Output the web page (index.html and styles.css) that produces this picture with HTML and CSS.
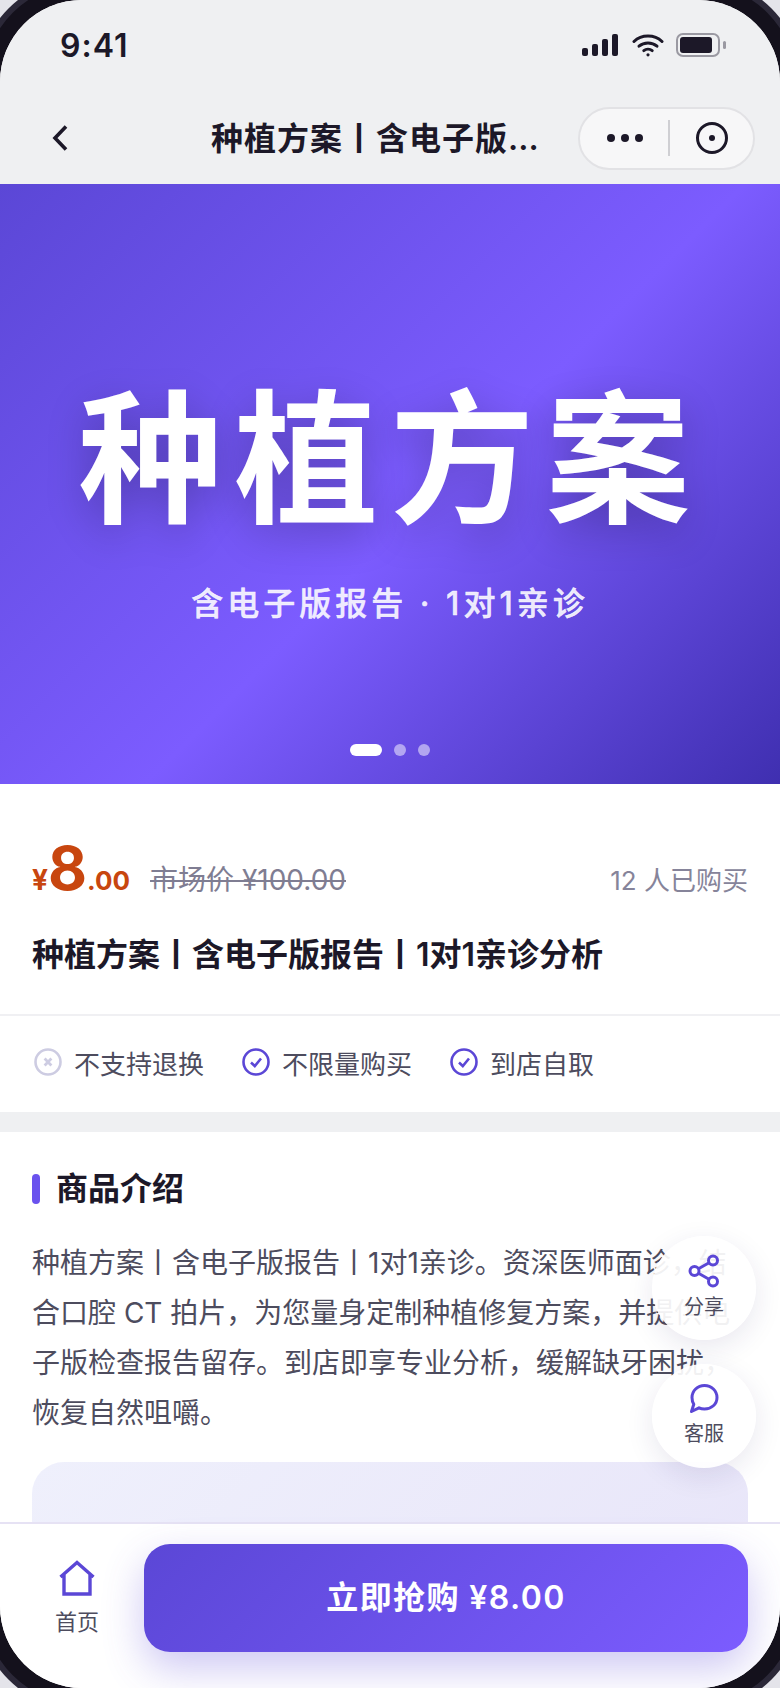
FILE: index.html
```html
<!DOCTYPE html>
<html lang="zh-CN">
<head>
    <meta charset="utf-8">
    <title>种植方案</title>
    <link rel="stylesheet" href="styles.css">
</head>
<body>
    <div class="device">
        <div class="screen">
            <div class="status-bar">
                <span class="time">9:41</span>
                <div class="status-icons">
                    <div class="signal"><i class="b1"></i><i class="b2"></i><i class="b3"></i><i class="b4"></i></div>
                    <svg class="wifi" width="32" height="24" viewBox="0 0 32 24" fill="none" stroke="#1c1828" stroke-width="3" stroke-linecap="round">
                        <path d="M2 8.5C9.5 1.2 22.5 1.2 30 8.5"/>
                        <path d="M7 13.2C12 8.8 20 8.8 25 13.2"/>
                        <path d="M11.8 17.6C14.2 15.7 17.8 15.7 20.2 17.6"/>
                        <circle cx="16" cy="21.8" r="1.6" fill="#1c1828" stroke="none"/>
                    </svg>
                    <div class="battery"><div class="battery-fill"></div></div>
                    <div class="battery-cap"></div>
                </div>
            </div>

            <div class="nav-bar">
                <svg class="back" width="16" height="28" viewBox="0 0 16 28" fill="none" stroke="#1c1828" stroke-width="3.6">
                    <path d="M14 2.5L3 14L14 25.5"/>
                </svg>
                <div class="nav-title">种植方案丨含电子版<span class="more">...</span></div>
                <div class="capsule">
                    <div class="capsule-dots"><i></i><i></i><i></i></div>
                    <div class="capsule-line"></div>
                    <svg width="34" height="34" viewBox="0 0 34 34" fill="none" stroke="#1c1828" stroke-width="3">
                        <circle cx="17" cy="17" r="14.5"/>
                        <circle cx="17" cy="17" r="3" fill="#1c1828" stroke="none"/>
                    </svg>
                </div>
            </div>

            <div class="content">
                <div class="hero">
                    <div class="hero-title">种植方案</div>
                    <div class="hero-sub">含电子版报告 · 1对1亲诊</div>
                    <div class="hero-dots"><i class="on"></i><i></i><i></i></div>
                </div>

                <div class="info">
                    <div class="price-row">
                        <span class="price"><span class="yen">¥</span><span class="big">8</span><span class="cents">.00</span></span>
                        <span class="market">市场价 ¥100.00</span>
                        <span class="sold">12 人已购买</span>
                    </div>
                    <div class="product-name">种植方案丨含电子版报告丨1对1亲诊分析</div>
                </div>

                <div class="tags">
                    <div class="tag">
                        <svg width="30" height="30" viewBox="0 0 30 30" fill="none" stroke="#cdcce2" stroke-width="2.6">
                            <circle cx="16" cy="15" r="12.5"/>
                            <path d="M12.6 11.6L19.4 18.4M19.4 11.6L12.6 18.4" stroke-width="2.8"/>
                        </svg>
                        <span>不支持退换</span>
                    </div>
                    <div class="tag">
                        <svg width="30" height="30" viewBox="0 0 30 30" fill="none" stroke="#5b47d6" stroke-width="2.6">
                            <circle cx="16" cy="15" r="12.5"/>
                            <path d="M11 15.5L14.8 19L21 11.5"/>
                        </svg>
                        <span>不限量购买</span>
                    </div>
                    <div class="tag">
                        <svg width="30" height="30" viewBox="0 0 30 30" fill="none" stroke="#5b47d6" stroke-width="2.6">
                            <circle cx="16" cy="15" r="12.5"/>
                            <path d="M11 15.5L14.8 19L21 11.5"/>
                        </svg>
                        <span>到店自取</span>
                    </div>
                </div>

                <div class="intro">
                    <h2 class="intro-title">商品介绍</h2>
                    <p class="intro-text">种植方案丨含电子版报告丨1对1亲诊。资深医师面诊，结合口腔 CT 拍片，为您量身定制种植修复方案，并提供电子版检查报告留存。到店即享专业分析，缓解缺牙困扰，恢复自然咀嚼。</p>
                    <div class="intro-pic"></div>
                </div>
            </div>

            <div class="float-btn float-share">
                <svg width="32" height="34" viewBox="0 0 32 34" fill="none" stroke="#5b47d6" stroke-width="3">
                    <circle cx="25" cy="6.5" r="4.5"/>
                    <circle cx="6.5" cy="17" r="4.5"/>
                    <circle cx="25" cy="27.5" r="4.5"/>
                    <path d="M10.5 14.7L21 8.8M10.5 19.3L21 25.2"/>
                </svg>
                <span>分享</span>
            </div>
            <div class="float-btn float-service">
                <svg width="32" height="32" viewBox="0 0 32 32" fill="none" stroke="#5b47d6" stroke-width="3" stroke-linejoin="round">
                    <path d="M16.5 2.5C23.5 2.5 29 7.8 29 14.5C29 21.2 23.5 26 16.5 26C14.5 26 12.6 25.6 11 24.8L3.5 28.5L5.8 21.2C4.6 19.3 4 17 4 14.5C4 7.8 9.5 2.5 16.5 2.5Z"/>
                </svg>
                <span>客服</span>
            </div>

            <div class="bottom-bar">
                <div class="home">
                    <svg width="36" height="36" viewBox="0 0 36 36" fill="none" stroke="#5b47d6" stroke-width="3.4">
                        <path d="M1.5 17L18 2.5L34.5 17M5 14.5V34H31V14.5"/>
                    </svg>
                    <span>首页</span>
                </div>
                <div class="buy-btn">立即抢购 ¥8.00</div>
            </div>
        </div>
    </div>
</body>
</html>
```

FILE: styles.css
```css
* { box-sizing: border-box; }
html, body { margin: 0; height: 100%; overflow: hidden; background: #e4e4ea; }
body { font-family: Inter, "Noto Sans CJK SC", sans-serif; color: #1c1828; }

.device {
    width: 824px;
    height: 1732px;
    margin: -22px;
    padding: 16px;
    background: #14111c;
    border: 6px solid #2b2838;
    border-radius: 104px;
}
.screen {
    position: relative;
    display: flex;
    flex-direction: column;
    width: 780px;
    height: 1688px;
    background: #fff;
    border-radius: 82px;
    overflow: hidden;
}

/* status bar */
.status-bar {
    flex: none;
    display: flex;
    justify-content: space-between;
    align-items: center;
    height: 92px;
    padding: 0 54px 2px 60px;
    background: #eff0f2;
}
.time { font-size: 32px; font-weight: 600; letter-spacing: 1px; }
.status-icons { display: flex; align-items: center; }
.signal { display: flex; align-items: flex-end; gap: 4px; height: 22px; margin-right: 14px; }
.signal i { display: block; width: 6px; background: #1c1828; border-radius: 2px; }
.signal .b1 { height: 8px; }
.signal .b2 { height: 12px; }
.signal .b3 { height: 17px; }
.signal .b4 { height: 22px; }
.wifi { margin-right: 12px; }
.battery {
    width: 44px;
    height: 24px;
    padding: 2px;
    border: 2px solid #9a99a2;
    border-radius: 7px;
}
.battery-fill { width: 32px; height: 16px; background: #1c1828; border-radius: 3px; }
.battery-cap { width: 3px; height: 8px; margin-left: 3px; background: #9a99a2; border-radius: 2px; }

/* nav */
.nav-bar {
    flex: none;
    position: relative;
    display: flex;
    align-items: center;
    height: 92px;
    padding: 0 25px 0 52px;
    background: #eff0f2;
}
.nav-title {
    position: absolute;
    left: 211px;
    top: 25px;
    font-size: 32px;
    line-height: 44px;
    font-weight: 600;
    letter-spacing: 1px;
    white-space: nowrap;
}
.nav-title .more { letter-spacing: 0; }
.capsule {
    display: flex;
    align-items: center;
    width: 177px;
    height: 63px;
    margin-left: auto;
    padding-left: 27px;
    background: #f7f7f8;
    border: 2px solid #e2e2e5;
    border-radius: 32px;
}
.capsule-dots { display: flex; gap: 6px; }
.capsule-dots i { display: block; width: 8px; height: 8px; background: #1c1828; border-radius: 50%; }
.capsule-line { width: 2px; height: 36px; margin: 0 25px; background: #cfcfd3; }

/* scrolling part */
.content { flex: 1; min-height: 0; overflow: hidden; }

.hero {
    position: relative;
    display: flex;
    flex-direction: column;
    align-items: center;
    height: 600px;
    padding-top: 174px;
    color: #fff;
    background: linear-gradient(135deg, #5b47d6 0%, #7c5cff 54%, #3f2fb0 100%);
}
.hero-title {
    font-size: 144px;
    line-height: 204px;
    font-weight: 700;
    letter-spacing: 12px;
    text-shadow: 0 12px 40px rgba(0, 0, 0, 0.24);
}
.hero-sub {
    margin-top: 20px;
    font-size: 32px;
    line-height: 44px;
    font-weight: 500;
    letter-spacing: 4px;
    color: rgba(255, 255, 255, 0.88);
    -webkit-text-stroke: 0.5px rgba(255, 255, 255, 0.88);
}
.hero-dots { position: absolute; left: 350px; bottom: 28px; display: flex; gap: 12px; }
.hero-dots i { display: block; width: 12px; height: 12px; background: rgba(255, 255, 255, 0.5); border-radius: 6px; }
.hero-dots .on { width: 32px; background: #fff; }

.info { height: 232px; padding: 48px 32px 0; border-bottom: 2px solid #f0f0f3; }
.price-row { display: flex; align-items: baseline; height: 72px; }
.price { color: #c8460f; font-weight: 700; white-space: nowrap; }
.yen { font-size: 28px; }
.big { font-size: 60px; line-height: 72px; }
.cents { font-size: 26px; }
.market { margin-left: 20px; font-size: 28px; color: #7f7d92; text-decoration: line-through; }
.sold { margin-left: auto; font-size: 26px; color: #86849a; }
.product-name { margin-top: 29px; font-size: 32px; line-height: 44px; font-weight: 600; }

.tags { display: flex; align-items: center; gap: 36px; height: 96px; padding: 0 32px 4px; }
.tag { display: flex; align-items: center; gap: 12px; font-size: 26px; color: #4d4c5e; }

.intro { margin-top: 0; padding: 38px 32px 0; background: #fff; border-top: 20px solid #eff0f2; }
.intro-title {
    display: flex;
    align-items: center;
    gap: 16px;
    margin: 0;
    font-size: 32px;
    line-height: 38px;
    font-weight: 600;
}
.intro-title::before { content: ""; width: 8px; height: 30px; background: #6a52ee; border-radius: 4px; }
.intro-text { margin: 30px 0 0; font-size: 28px; line-height: 50px; color: #4d4c5e; }
.intro-pic {
    height: 400px;
    margin-top: 24px;
    background: linear-gradient(135deg, #eff0fc, #e6e2f8);
    border-radius: 32px;
}

/* floating buttons */
.float-btn {
    position: absolute;
    right: 24px;
    display: flex;
    flex-direction: column;
    align-items: center;
    justify-content: center;
    gap: 4px;
    width: 104px;
    height: 104px;
    font-size: 20px;
    line-height: 30px;
    color: #4d4c5e;
    background: rgba(255, 255, 255, 0.92);
    border-radius: 50%;
    box-shadow: 0 8px 28px rgba(40, 30, 100, 0.1);
}
.float-share { top: 1236px; }
.float-service { top: 1364px; }

/* bottom bar */
.bottom-bar {
    flex: none;
    position: relative;
    display: flex;
    align-items: flex-start;
    height: 166px;
    padding: 20px 32px 0 0;
    background: #fff;
    border-top: 2px solid #e6e2f4;
}
.home {
    display: flex;
    flex-direction: column;
    align-items: center;
    gap: 11px;
    width: 140px;
    margin: 16px -3px 0 7px;
    font-size: 22px;
    line-height: 30px;
    color: #4d4c5e;
}
.buy-btn {
    flex: 1;
    height: 108px;
    font-size: 32px;
    line-height: 108px;
    font-weight: 600;
    letter-spacing: 1.4px;
    text-align: center;
    color: #fff;
    background: linear-gradient(135deg, #5b47d6, #7c5cff);
    border-radius: 26px;
    box-shadow: 0 16px 40px rgba(91, 71, 214, 0.3);
}
```
